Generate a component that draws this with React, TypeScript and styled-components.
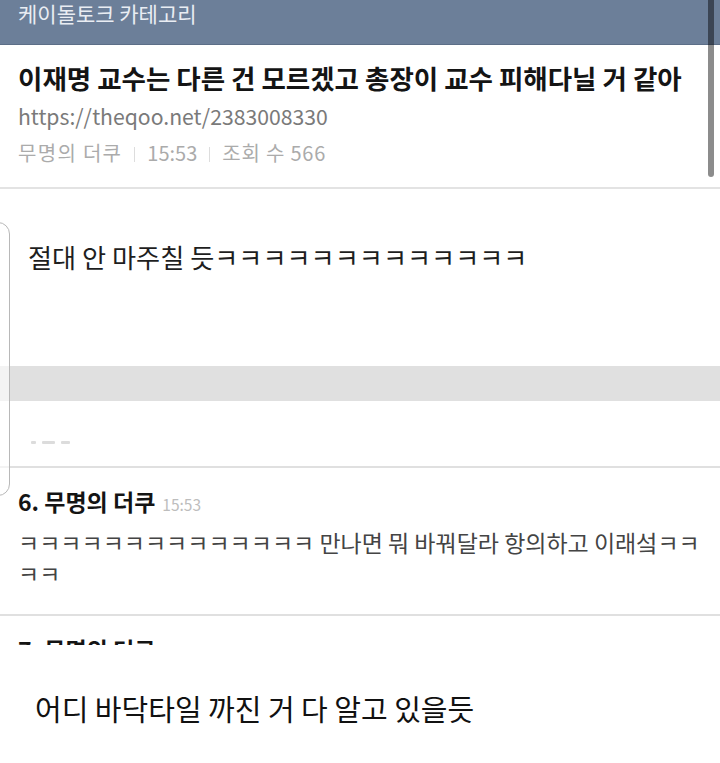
import React from 'react';
import styled, { createGlobalStyle } from 'styled-components';

const GlobalStyle = createGlobalStyle`
  html, body {
    margin: 0;
    padding: 0;
    background: #ffffff;
  }
  body {
    font-family: "Noto Sans CJK KR", "Noto Sans", sans-serif;
    color: #1a1a1a;
  }
`;

const comments = [
  {
    no: 6,
    name: '무명의 더쿠',
    time: '15:53',
    text: 'ㅋㅋㅋㅋㅋㅋㅋㅋㅋㅋㅋㅋㅋㅋ 만나면 뭐 바꿔달라 항의하고 이래섴ㅋㅋㅋㅋ',
  },
  { no: 7, name: '무명의 더쿠', time: '15:53', text: '' },
];

export default function App() {
  return (
    <Page>
      <GlobalStyle />
      <Shot>
        <Header>케이돌토크 카테고리</Header>
        <PostHead>
          <Title>이재명 교수는 다른 건 모르겠고 총장이 교수 피해다닐 거 같아</Title>
          <Url>https://theqoo.net/2383008330</Url>
          <Meta>
            <Name>무명의 더쿠</Name>
            <Sep />
            <span>15:53</span>
            <Sep />
            <Views>조회 수 566</Views>
          </Meta>
        </PostHead>
        <PostBody>
          <BodyText>절대 안 마주칠 듯ㅋㅋㅋㅋㅋㅋㅋㅋㅋㅋㅋㅋㅋ</BodyText>
        </PostBody>
        <SectionGap />
        <CutRow>
          <Blot $w={5} />
          <Blot $w={13} />
          <Blot $w={9} />
        </CutRow>
        {comments.map((c) => (
          <Comment key={c.no}>
            <CommentHead>
              {c.no}. {c.name}
              <Time>{c.time}</Time>
            </CommentHead>
            {c.text && <CommentText>{c.text}</CommentText>}
          </Comment>
        ))}
        <EdgeFrame />
        <Scrollbar />
      </Shot>
      <Caption>어디 바닥타일 까진 거 다 알고 있을듯</Caption>
    </Page>
  );
}

const Page = styled.div`
  display: flex;
  flex-direction: column;
  width: 720px;
  height: 763px;
  overflow: hidden;
  background: #ffffff;
`;

const Shot = styled.div`
  position: relative;
  display: flex;
  flex-direction: column;
  height: 645px;
  flex-shrink: 0;
  overflow: hidden;

  & > * {
    flex-shrink: 0;
  }
`;

const Header = styled.div`
  height: 43px;
  padding: 1px 0 0 18px;
  background: #6c7f99;
  border-bottom: 1px solid #5c6e87;
  color: #e9edf3;
  font-size: 21px;
  line-height: 25px;
`;

const PostHead = styled.div`
  display: flex;
  flex-direction: column;
  gap: 7px;
  padding: 17px 18px 19px;
  border-bottom: 2px solid #e3e3e3;
`;

const Title = styled.div`
  font-size: 26.5px;
  font-weight: 700;
  line-height: 32px;
  color: #141414;
  white-space: nowrap;
`;

const Url = styled.div`
  font-size: 21.2px;
  line-height: 30px;
  color: #7a7a7a;
`;

const Meta = styled.div`
  display: flex;
  align-items: center;
  font-size: 20px;
  line-height: 30px;
  color: #ababab;
`;

const Name = styled.span`
  letter-spacing: 1.3px;
`;

const Views = styled.span`
  letter-spacing: 0.8px;
`;

const Sep = styled.i`
  display: block;
  width: 1px;
  height: 15px;
  margin: 2px 12px 0;
  background: #dddddd;
`;

const PostBody = styled.div`
  height: 177px;
  padding: 51px 28px 0;
  box-sizing: border-box;
`;

const BodyText = styled.div`
  font-size: 26.2px;
  line-height: 34px;
  color: #1e1e1e;
`;

const SectionGap = styled.div`
  height: 35px;
  background: #e0e0e0;
`;

const CutRow = styled.div`
  display: flex;
  align-items: flex-start;
  gap: 6px;
  height: 67px;
  padding: 40px 0 0 31px;
  border-bottom: 2px solid #e0e0e0;
  box-sizing: border-box;
`;

const Blot = styled.span<{ $w: number }>`
  width: ${(p) => p.$w}px;
  height: 3px;
  background: #dcdcdc;
  border-radius: 1px;
`;

const Comment = styled.div`
  display: flex;
  flex-direction: column;
  gap: 9px;
  padding: 19px 18px 25px;
  border-bottom: 2px solid #e0e0e0;
`;

const CommentHead = styled.div`
  font-size: 23px;
  font-weight: 700;
  line-height: 28px;
  color: #141414;
`;

const Time = styled.span`
  margin-left: 7px;
  font-size: 15.5px;
  font-weight: 400;
  color: #bdbdbd;
`;

const CommentText = styled.div`
  font-size: 23px;
  line-height: 31px;
  color: #444444;
`;

const EdgeFrame = styled.div`
  position: absolute;
  left: -20px;
  top: 222px;
  width: 28px;
  height: 272px;
  border: 1.5px solid #b8b8b8;
  border-radius: 12px;
  background: rgba(255, 255, 255, 0.6);
`;

const Scrollbar = styled.div`
  position: absolute;
  right: 6px;
  top: -10px;
  width: 6px;
  height: 187px;
  border-radius: 3px;
  background: rgba(0, 0, 0, 0.45);
`;

const Caption = styled.div`
  margin-top: 43px;
  padding-left: 35px;
  font-size: 29px;
  line-height: 40px;
  color: #111111;
`;
